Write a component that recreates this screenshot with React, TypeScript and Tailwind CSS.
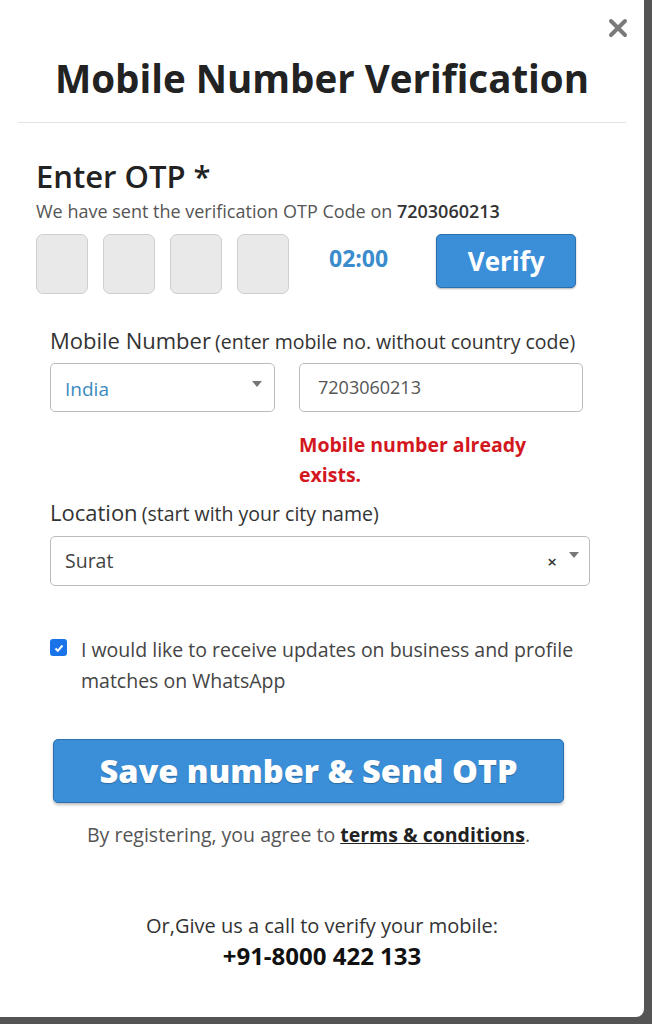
import React from "react";

export default function App() {
  return (
    <div className="w-[652px] h-[1024px] bg-[#545454] overflow-hidden" style={{ fontFamily: '"Open Sans", "Noto Sans", sans-serif' }}>
      <div className="relative w-[644px] h-[1017px] bg-white rounded-br-[8px] flex flex-col">
        <button className="absolute top-[18px] right-[16px]">
          <svg width="20" height="20" viewBox="0 0 20 20"><path d="M3 3L17 17M17 3L3 17" stroke="#7a7a7a" strokeWidth="4" strokeLinecap="round" /></svg>
        </button>
        <h1 className="mt-[52px] text-center text-[38.5px] font-bold leading-[52px] text-[#222]">Mobile Number Verification</h1>
        <div className="mx-[18px] mt-[18px] border-t border-[#e3e3e3]" />
        <div className="pl-[36px] pr-[40px] mt-[33px]">
          <div className="text-[31px] font-semibold text-[#222] leading-[40px]">Enter OTP *</div>
          <div className="text-[18px] text-[#555] leading-[22px] mt-[4px] whitespace-nowrap">
            We have sent the verification OTP Code on <span className="font-semibold text-[#333]">7203060213</span>
          </div>
          <div className="flex items-start mt-[12px]">
            <div className="flex gap-[15px]">
              {[0, 1, 2, 3].map((i) => (
                <div key={i} className="w-[52px] h-[60px] bg-[#e9e9e9] border border-[#cfcfcf] rounded-[7px]" />
              ))}
            </div>
            <div className="ml-[40px] mt-[10px] text-[23px] leading-[28px] font-bold text-[#3a8ccc]">02:00</div>
            <button className="ml-[48px] w-[140px] h-[54px] bg-[#3b8fd9] border border-[#2b6fae] rounded-[5px] text-white text-[26px] font-bold shadow-[0_1px_2px_rgba(0,0,0,0.3)]">Verify</button>
          </div>
        </div>
        <div className="pl-[50px] pr-[54px] mt-[32px]">
          <div className="text-[#333] leading-[28px] whitespace-nowrap">
            <span className="text-[22px] font-medium">Mobile Number</span>{" "}
            <span className="text-[19.5px]">(enter mobile no. without country code)</span>
          </div>
          <div className="flex gap-[24px] mt-[6px]">
            <div className="w-[225px] h-[49px] border border-[#bbb] rounded-[5px] flex items-center justify-between pl-[14px] pr-[12px]">
              <span className="text-[19px] text-[#3a8ac0] mt-[4px]">India</span>
              <svg width="10" height="6" viewBox="0 0 10 6" className="mb-[8px]"><path d="M0 0h10L5 6z" fill="#777" /></svg>
            </div>
            <div className="w-[284px] h-[49px] border border-[#bbb] rounded-[5px] flex items-center pl-[18px] text-[18px] text-[#555]">7203060213</div>
          </div>
          <div className="ml-[249px] mt-[18px] text-[19.5px] font-bold text-[#d3171f] leading-[30px]">
            Mobile number already<br />exists.
          </div>
          <div className="text-[#333] leading-[28px] mt-[8px] whitespace-nowrap">
            <span className="text-[22px] font-medium">Location</span>{" "}
            <span className="text-[19.5px]">(start with your city name)</span>
          </div>
          <div className="w-[540px] h-[50px] mt-[7px] border border-[#bbb] rounded-[5px] flex items-center pl-[14px] pr-[10px] text-[19.5px] text-[#444]">
            <span className="flex-1">Surat</span>
            <span className="text-[17px] text-[#333] font-semibold mt-[2px]">×</span>
            <svg width="10" height="6" viewBox="0 0 10 6" className="ml-[12px] mb-[12px]"><path d="M0 0h10L5 6z" fill="#777" /></svg>
          </div>
          <div className="flex items-start mt-[48px]">
            <div className="w-[17px] h-[17px] mt-[5px] rounded-[3px] bg-[#1a73e8] flex items-center justify-center shrink-0">
              <svg width="12" height="12" viewBox="0 0 12 12"><path d="M2.5 6.5l2.3 2.3L9.5 3.5" stroke="white" strokeWidth="2" fill="none" /></svg>
            </div>
            <div className="ml-[14px] text-[19.5px] text-[#444] leading-[31px]">I would like to receive updates on business and profile matches on WhatsApp</div>
          </div>
        </div>
        <div className="pl-[53px] pr-[80px] mt-[43px]">
          <button className="w-[511px] h-[64px] bg-[#3a8fd8] border border-[#2c70b0] rounded-[5px] text-white text-[32.5px] font-extrabold shadow-[0_2px_3px_rgba(0,0,0,0.25)]" style={{ textShadow: "0 1px 1px rgba(0,0,0,0.25)" }}>
            Save number &amp; Send OTP
          </button>
        </div>
        <div className="text-center mt-[20px] text-[19.5px] leading-[24px] text-[#555] pr-[27px]">
          By registering, you agree to <span className="font-bold text-[#222] underline">terms &amp; conditions</span>.
        </div>
        <div className="text-center mt-[64px] text-[20px] text-[#333] leading-[30px]">Or,Give us a call to verify your mobile:</div>
        <div className="text-center text-[24px] font-bold text-[#111] leading-[30px]">+91-8000 422 133</div>
      </div>
    </div>
  );
}
